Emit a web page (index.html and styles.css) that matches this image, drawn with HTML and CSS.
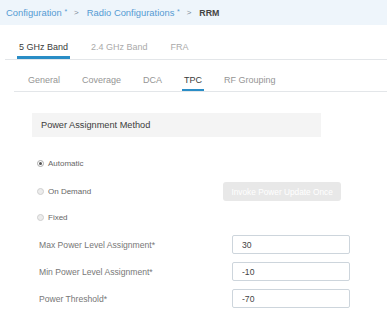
FILE: index.html
```html
<!DOCTYPE html>
<html lang="en">

<head>
    <meta charset="UTF-8">
    <meta name="viewport" content="width=device-width, initial-scale=1.0">
    <title>RRM - TPC</title>
    <link rel="stylesheet" href="styles.css">
</head>

<body>
    <!-- Breadcrumb -->
    <div class="crumbs">
        <a href="#" class="crumb">Configuration <span class="star">*</span></a>
        <span class="sep">&gt;</span>
        <a href="#" class="crumb">Radio Configurations <span class="star">*</span></a>
        <span class="sep">&gt;</span>
        <span class="current">RRM</span>
    </div>

    <!-- Band tabs -->
    <div class="bands">
        <a href="#" class="band active">5 GHz Band</a>
        <a href="#" class="band">2.4 GHz Band</a>
        <a href="#" class="band">FRA</a>
    </div>

    <!-- Sub tabs -->
    <div class="subtabs">
        <a href="#" class="subtab">General</a>
        <a href="#" class="subtab">Coverage</a>
        <a href="#" class="subtab">DCA</a>
        <a href="#" class="subtab active">TPC</a>
        <a href="#" class="subtab">RF Grouping</a>
    </div>

    <div class="section-title">Power Assignment Method</div>

    <div class="method">
        <label class="radio-row first">
            <span class="radio checked"></span>
            Automatic
        </label>
        <div class="radio-row demand">
            <label class="radio-label">
                <span class="radio"></span>
                On Demand
            </label>
            <button type="button" class="invoke" disabled>Invoke Power Update Once</button>
        </div>
        <label class="radio-row fixed">
            <span class="radio"></span>
            Fixed
        </label>
    </div>

    <form class="levels">
        <div class="field">
            <label for="maxPower">Max Power Level Assignment*</label>
            <input type="text" id="maxPower" value="30">
        </div>
        <div class="field">
            <label for="minPower">Min Power Level Assignment*</label>
            <input type="text" id="minPower" value="-10">
        </div>
        <div class="field">
            <label for="threshold">Power Threshold*</label>
            <input type="text" id="threshold" value="-70">
        </div>
    </form>
</body>

</html>
```

FILE: styles.css
```css
body {
    margin: 0;
    font-family: "Liberation Sans", Arial, sans-serif;
    background-color: #fff;
    color: #333;
}

a {
    text-decoration: none;
}

/* breadcrumb bar */
.crumbs {
    height: 25px;
    background-color: #eef5fb;
    display: flex;
    align-items: center;
    padding-left: 6px;
    font-size: 9.4px;
}

.crumb {
    color: #559bd3;
}

.star {
    font-size: 7px;
    vertical-align: 2px;
}

.sep {
    color: #7a8a99;
    margin: 0 8px 0 7px;
    font-size: 8px;
}

.current {
    color: #444;
    font-weight: bold;
    font-size: 8.8px;
}

/* band tabs */
.bands {
    display: flex;
    margin: 13px 0 0 5px;
    padding-left: 12px;
    border-bottom: 1px solid #e3e6e9;
    gap: 19px;
}

.band {
    font-size: 9px;
    color: #aaa;
    height: 18px;
    line-height: 18px;
    padding: 0 2px;
    border-bottom: 3px solid transparent;
}

.band.active {
    color: #3a3a3a;
    border-bottom-color: #2a8dc6;
}

/* sub tabs */
.subtabs {
    display: flex;
    margin: 11px 0 0 14px;
    padding-left: 12px;
    border-bottom: 1px solid #e3e6e9;
    gap: 18px;
}

.subtab {
    font-size: 9px;
    color: #959595;
    height: 18px;
    line-height: 18px;
    padding: 0 2px;
    border-bottom: 2px solid transparent;
}

.subtab.active {
    color: #3a3a3a;
    border-bottom-color: #2a8dc6;
}

.section-title {
    margin: 21px 0 0 32px;
    width: 280px;
    height: 24px;
    line-height: 24px;
    padding-left: 9px;
    background-color: #f4f4f4;
    font-size: 9.2px;
    color: #3c3c3c;
}

/* radio buttons */
.method {
    display: flex;
    flex-direction: column;
    padding-left: 37px;
}

.radio-row,
.radio-label {
    display: flex;
    align-items: center;
    font-size: 8px;
    color: #666;
    height: 14px;
}

.radio-row.first {
    margin-top: 19px;
}

.radio-row.demand {
    margin-top: 12px;
    height: 19px;
}

.radio-row.fixed {
    margin-top: 9px;
}

.radio {
    width: 7px;
    height: 7px;
    border-radius: 50%;
    border: 1px solid #cfcfcf;
    background-color: #ececec;
    margin-right: 4px;
    box-sizing: border-box;
    position: relative;
}

.radio.checked {
    background-color: #fff;
    border-color: #aaa;
}

.radio.checked::after {
    content: "";
    position: absolute;
    left: 1px;
    top: 1px;
    width: 3px;
    height: 3px;
    border-radius: 50%;
    background-color: #555;
}

.invoke {
    margin-left: 132px;
    width: 118px;
    height: 19px;
    border: none;
    border-radius: 3px;
    background-color: #e8e8e8;
    color: #fff;
    font-family: "Liberation Sans", Arial, sans-serif;
    font-size: 8.3px;
    padding: 0;
}

/* power level inputs */
.levels {
    display: flex;
    flex-direction: column;
    gap: 8px;
    margin: 11px 0 0 39px;
}

.field {
    display: flex;
    align-items: center;
    height: 19px;
}

.field label {
    width: 193px;
    font-size: 8.6px;
    color: #777;
}

.field input {
    width: 118px;
    height: 19px;
    box-sizing: border-box;
    border: 1px solid #cdd5dc;
    border-radius: 2px;
    padding: 0 9px;
    font-family: "Liberation Sans", Arial, sans-serif;
    font-size: 8.6px;
    color: #444;
}
```
